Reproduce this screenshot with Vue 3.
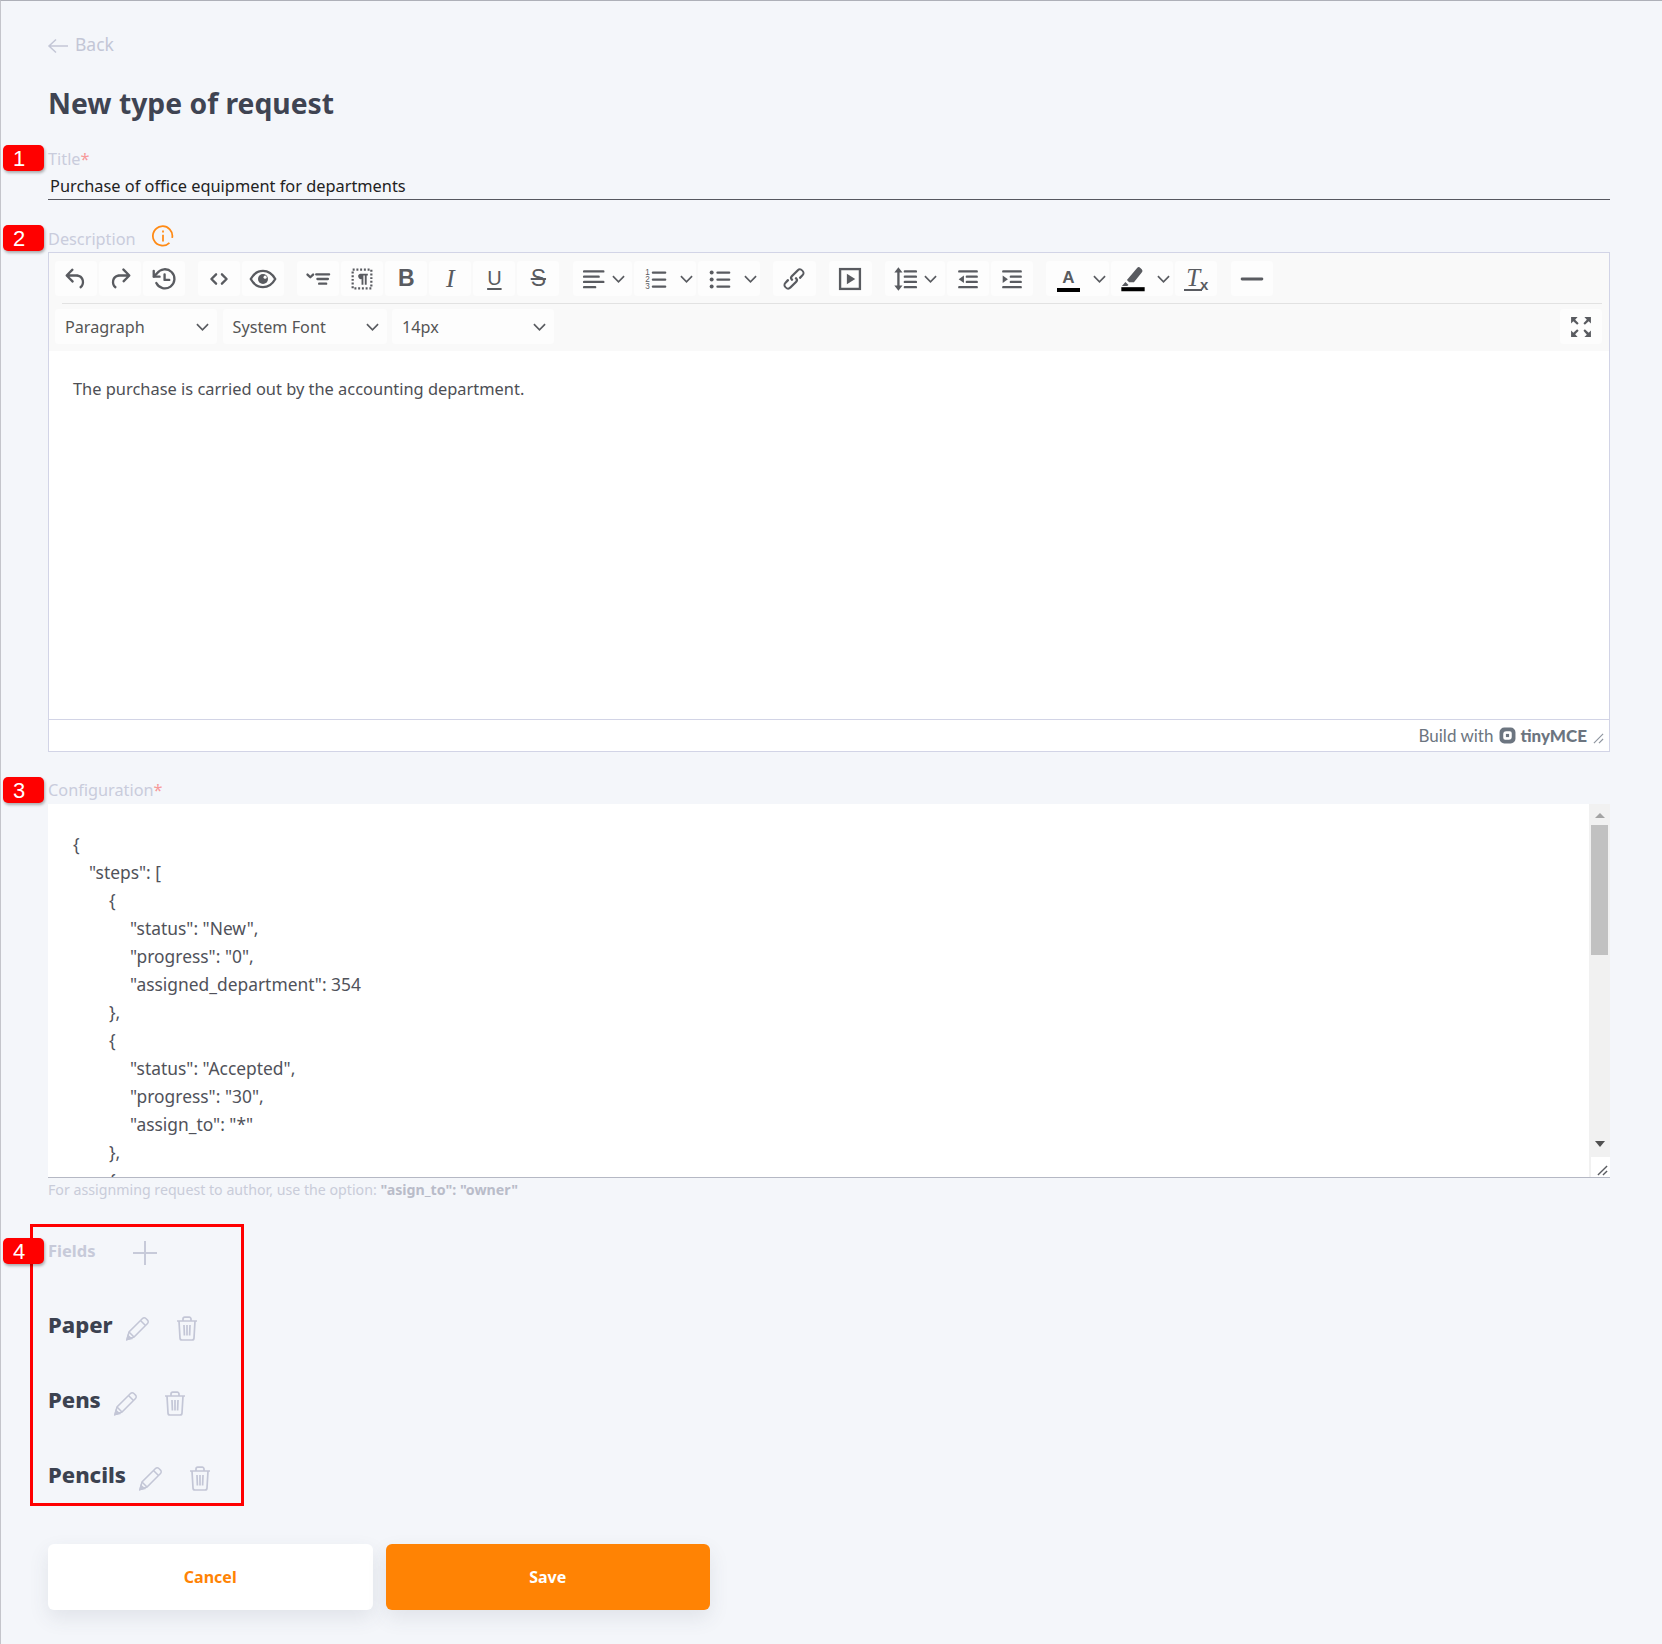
<script setup>
const configLines = [
  { text: '{', indent: 0 },
  { text: '"steps": [', indent: 16 },
  { text: '{', indent: 36 },
  { text: '"status": "New",', indent: 57 },
  { text: '"progress": "0",', indent: 57 },
  { text: '"assigned_department": 354', indent: 57 },
  { text: '},', indent: 36 },
  { text: '{', indent: 36 },
  { text: '"status": "Accepted",', indent: 57 },
  { text: '"progress": "30",', indent: 57 },
  { text: '"assign_to": "*"', indent: 57 },
  { text: '},', indent: 36 },
  { text: '{', indent: 36 }
]
const fields = ['Paper', 'Pens', 'Pencils']
const selects = [
  { label: 'Paragraph', cls: 'sel-a' },
  { label: 'System Font', cls: 'sel-b' },
  { label: '14px', cls: 'sel-c' }
]
</script>

<template>
  <div class="page">
    <a class="back">
      <svg class="back-arrow" viewBox="0 0 22 16" fill="none"><path d="M21 8H2M9 1.5 2 8l7 6.5" /></svg>
      <span>Back</span>
    </a>
    <h1 class="heading">New type of request</h1>

    <section class="field title-field">
      <span class="badge badge-1">1</span>
      <label class="label">Title<em>*</em></label>
      <div class="input">Purchase of office equipment for departments</div>
    </section>

    <section class="field desc-field">
      <span class="badge badge-2">2</span>
      <div class="desc-head">
        <label class="label">Description</label>
        <svg class="info" viewBox="0 0 24 24" fill="none">
          <path d="M19 19.5A10.6 10.6 0 1 1 22 14" />
          <path d="M12 10.5V18M12 6v2.2" />
        </svg>
      </div>
      <div class="editor">
        <div class="toolbar">
          <div class="row row-1">
            <div class="group">
              <button class="tb"><svg class="ico" viewBox="0 0 24 24"><path class="f" d="M6.4 8H12c3.7 0 6.2 2 6.8 5.1.6 2.7-.4 5.6-2.3 6.8a1 1 0 0 1-1-1.8c1.1-.6 1.8-2.7 1.4-4.6-.5-2.1-2.1-3.5-4.9-3.5H6.4l3.3 3.3a1 1 0 1 1-1.4 1.4l-5-5a1 1 0 0 1 0-1.4l5-5a1 1 0 0 1 1.4 1.4L6.4 8Z" /></svg></button>
              <button class="tb"><svg class="ico" viewBox="0 0 24 24"><path class="f" d="M17.6 10H12c-2.8 0-4.4 1.4-4.9 3.5-.4 2 .3 4 1.4 4.6a1 1 0 1 1-1 1.8c-2-1.2-2.9-4.1-2.3-6.8.6-3 3-5.1 6.8-5.1h5.6l-3.3-3.3a1 1 0 1 1 1.4-1.4l5 5a1 1 0 0 1 0 1.4l-5 5a1 1 0 0 1-1.4-1.4l3.3-3.3Z" /></svg></button>
              <button class="tb"><svg class="ico" viewBox="0 0 24 24"><path class="s" d="M5.4 15.5A8.2 8.2 0 1 0 6 7.2L3.4 9.8" /><path class="s" d="M3.2 5v5h5" /><path class="s" d="M12.5 8v4.8h4" /></svg></button>
            </div>
            <div class="group">
              <button class="tb"><svg class="ico" viewBox="0 0 24 24"><path class="s" d="M9.5 8l-4 4 4 4M14.5 8l4 4-4 4" /></svg></button>
              <button class="tb"><svg class="ico" viewBox="0 0 24 24"><path class="s" d="M1.5 12C4 7.5 7.6 5 12 5s8 2.500 10.500 7C20 16.500 16.400 19 12 19s-8-2.500-10.500-7Z" /><circle class="f" cx="12" cy="12" r="4.300" /><circle cx="13.800" cy="10.400" r="1.300" fill="#fdfdfd" /></svg></button>
            </div>
            <div class="group">
              <button class="tb"><svg class="ico" viewBox="0 0 24 24"><path class="s" d="M3 8.200l2.400 2.300 2.400-2.300M10.500 8h11M11.500 12h9M13 16h6" /></svg></button>
              <button class="tb"><svg class="ico" viewBox="0 0 24 24"><rect x="4" y="4" width="16" height="16" fill="none" stroke="#595b60" stroke-width="1.900" stroke-dasharray="1.700 1.500" /><path class="f" d="M10.500 7.500H17v1.600h-1V17h-1.600V9.100h-1.200V17h-1.600v-5a2.300 2.300 0 0 1-1.100-4.500Z" /></svg></button>
              <button class="tb glyph g-bold">B</button>
              <button class="tb glyph g-italic">I</button>
              <button class="tb glyph g-under">U</button>
              <button class="tb glyph g-strike">S</button>
            </div>
            <div class="group">
              <button class="tb split s59"><svg class="ico" viewBox="0 0 24 24"><path class="s" d="M3.500 5.500H20M3.500 10H16M3.500 14.500H20M3.500 19H13" /></svg><svg class="chev" viewBox="0 0 14 8"><path d="M1 1l6 6 6-6" /></svg></button>
              <button class="tb split s62"><svg class="ico" viewBox="0 0 24 24"><text x="2" y="8.500" class="mini">1</text><text x="2" y="14.500" class="mini">2</text><text x="2" y="20.500" class="mini">3</text><path class="s" d="M8.500 6.500H19M8.500 12.500H19M8.500 18.500H19" /></svg><svg class="chev" viewBox="0 0 14 8"><path d="M1 1l6 6 6-6" /></svg></button>
              <button class="tb split s62"><svg class="ico" viewBox="0 0 24 24"><circle class="f" cx="4" cy="6.500" r="1.700" /><circle class="f" cx="4" cy="12.500" r="1.700" /><circle class="f" cx="4" cy="18.500" r="1.700" /><path class="s" d="M9 6.500H19M9 12.500H19M9 18.500H19" /></svg><svg class="chev" viewBox="0 0 14 8"><path d="M1 1l6 6 6-6" /></svg></button>
            </div>
            <div class="group">
              <button class="tb w43"><svg class="ico" viewBox="0 0 24 24"><path class="f" d="M6.200 12.300a1 1 0 0 1 1.400 1.400l-2 2a2 2 0 1 0 2.800 2.800l4.800-4.800a1 1 0 0 0 0-1.400 1 1 0 1 1 1.400-1.300 2.900 2.900 0 0 1 0 4L9.600 20a3.900 3.900 0 0 1-5.500-5.500l2-2.200Zm11.600-.6a1 1 0 0 1-1.400-1.400l2-2a2 2 0 1 0-2.800-2.800L10.800 10.300a1 1 0 0 0 0 1.400A1 1 0 1 1 9.400 13a2.900 2.900 0 0 1 0-4l5-5a3.900 3.900 0 0 1 5.500 5.500l-2.100 2.200Z" /></svg></button>
            </div>
            <div class="group">
              <button class="tb w43"><svg class="ico" viewBox="0 0 24 24"><rect x="3.500" y="3.500" width="17" height="17" fill="none" stroke="#595b60" stroke-width="2" /><path class="f" d="M9.300 7.500 16.500 12l-7.200 4.500Z" /></svg></button>
            </div>
            <div class="group">
              <button class="tb split s60"><svg class="ico" viewBox="0 0 24 24"><path class="s" d="M5.500 4.500v15" /><path class="f" d="M5.500 2 9 6.500H2ZM5.500 22 9 17.500H2Z" /><path class="s" d="M11 5.500h9.500M11 10h9.500M11 14.500h9.500M11 19h9.500" /></svg><svg class="chev" viewBox="0 0 14 8"><path d="M1 1l6 6 6-6" /></svg></button>
              <button class="tb"><svg class="ico" viewBox="0 0 24 24"><path class="s" d="M4.500 5.500h15M11 10h8.500M11 14.500h8.500M4.500 19h15" /><path class="f" d="M8.500 9v6.500L4 12.200Z" /></svg></button>
              <button class="tb"><svg class="ico" viewBox="0 0 24 24"><path class="s" d="M4.500 5.500h15M11 10h8.500M11 14.500h8.500M4.500 19h15" /><path class="f" d="M4 9v6.500L8.500 12.200Z" /></svg></button>
            </div>
            <div class="group">
              <button class="tb split s63"><span class="color-a"><span class="a-letter">A</span><i class="a-bar"></i></span><svg class="chev" viewBox="0 0 14 8"><path d="M1 1l6 6 6-6" /></svg></button>
              <button class="tb split s62h"><svg class="ico" viewBox="0 0 24 24"><path class="f" d="M15.500 2.500a2 2 0 0 1 2.800 0l1.200 1.200a2 2 0 0 1 0 2.800l-6.700 8.200H8.700L6.800 12.800 15.500 2.500ZM5.500 14.500l2.700 2.600-1.300.9H2.500Z" /><rect x="2" y="19" width="20" height="3.500" fill="#000" /></svg><svg class="chev" viewBox="0 0 14 8"><path d="M1 1l6 6 6-6" /></svg></button>
              <button class="tb glyph g-clear"><span class="clear-t">T</span><span class="clear-x">x</span></button>
            </div>
            <div class="group">
              <button class="tb"><svg class="ico" viewBox="0 0 24 24"><path class="s thick" d="M3.500 12h17" /></svg></button>
            </div>
          </div>
          <div class="row-2">
            <div class="sel-list">
              <button v-for="s in selects" :key="s.label" class="select" :class="s.cls">
                <span>{{ s.label }}</span>
                <svg class="chev" viewBox="0 0 14 8"><path d="M1 1l6 6 6-6" /></svg>
              </button>
            </div>
            <button class="tb full"><svg class="ico" viewBox="0 0 24 24"><path class="f" d="M15.300 10l-1.200-1.300 2.900-3L14.900 3.500H20.500v5.600l-1.900-2.100-3.300 3ZM8.700 10 5.400 7 3.500 9.100V3.500h5.600L7 5.700l3 3L8.700 10Zm5.400 5.300 1.200-1.300 3.300 3 1.900-2.100v5.600h-5.600l2.100-1.800-2.900-3.400ZM8.700 14l1.300 1.300-3 3L9.100 20.500H3.500v-5.600l1.900 2.100 3.300-3Z" /></svg></button>
          </div>
        </div>
        <div class="body">The purchase is carried out by the accounting department.</div>
        <div class="status">
          <span class="build">Build with</span>
          <svg class="logo" viewBox="0 0 16 16"><path fill="#6c7580" fill-rule="evenodd" d="M5 .5h6A4.500 4.500 0 0 1 15.500 5v6A4.500 4.500 0 0 1 11 15.500H5A4.500 4.500 0 0 1 .5 11V5A4.500 4.500 0 0 1 5 .5Zm1.800 3.500A2.800 2.800 0 0 0 4 6.800v3.400A1.800 1.800 0 0 0 5.800 12h3.400A2.800 2.800 0 0 0 12 9.200V5.800A1.800 1.800 0 0 0 10.200 4Z" /><rect x="6.500" y="6.500" width="3" height="3" fill="#6c7580" /></svg>
          <span class="tiny">tinyMCE</span>
          <svg class="grip" viewBox="0 0 12 12"><path d="M1 11 11 1M6.500 11 11 6.500" /></svg>
        </div>
      </div>
    </section>

    <section class="field config-field">
      <span class="badge badge-3">3</span>
      <label class="label config-label">Configuration<em>*</em></label>
      <div class="config">
        <div class="code">
          <div v-for="(l, i) in configLines" :key="i" class="code-line" :style="{ marginLeft: l.indent + 'px' }">{{ l.text }}</div>
        </div>
        <div class="side">
          <div class="scroll">
            <i class="arrow up"></i>
            <i class="thumb"></i>
            <i class="arrow down"></i>
          </div>
          <div class="corner"><svg class="grip dark" viewBox="0 0 12 12"><path d="M1 11 11 1M6.500 11 11 6.500" /></svg></div>
        </div>
      </div>
      <p class="hint">For assignming request to author, use the option: <b>"asign_to": "owner"</b></p>
    </section>

    <section class="fields">
      <span class="red-box"></span>
      <span class="badge badge-4">4</span>
      <div class="fields-head">
        <span class="fields-title">Fields</span>
        <svg class="plus" viewBox="0 0 26 26"><path d="M13 1v24M1 13h24" /></svg>
      </div>
      <div class="field-list">
        <div v-for="f in fields" :key="f" class="field-row">
          <span class="field-name">{{ f }}</span>
          <svg class="pencil" viewBox="0 0 25 25" fill="none"><path d="M2 23.500 4 16 17.500 2.500a2.400 2.400 0 0 1 3.400 0l1.600 1.600a2.400 2.400 0 0 1 0 3.400L9 21Z" /><path d="M15.500 4.500l5 5M4 16l5 5" /><path class="tip" d="M2 23.500 3 19.500l3.500 3Z" /></svg>
          <svg class="trash" viewBox="0 0 22 25" fill="none"><path d="M1 5h20M7 5V3a1.800 1.800 0 0 1 1.800-1.800h4.400A1.800 1.800 0 0 1 15 3v2M3 5l1 17a2 2 0 0 0 2 2h10a2 2 0 0 0 2-2l1-17M8 9l.4 10.500M11 9v10.500M14 9l-.4 10.500" /></svg>
        </div>
      </div>
    </section>

    <div class="actions">
      <button class="btn cancel">Cancel</button>
      <button class="btn save">Save</button>
    </div>
  </div>
</template>

<style scoped>
* { box-sizing: border-box; }
.page {
  position: relative;
  width: 1662px;
  min-height: 1644px;
  background: #f4f6fa;
  border-top: 1px solid #aeb0b8;
  border-left: 1px solid #c4c5cb;
  padding: 31px 52px 0 47px;
  font-family: "Noto Sans", "Open Sans", sans-serif;
  color: #3f4452;
  overflow: hidden;
}
.back {
  display: flex;
  align-items: center;
  gap: 6px;
  height: 24px;
  font-size: 17.500px;
  color: #c3c6d6;
}
.back-arrow { width: 22px; height: 16px; stroke: #c3c6d6; stroke-width: 1.500; margin-top: 3px; margin-left: -1px; }
.heading {
  margin: 27px 0 0 0;
  height: 41px;
  font-size: 28.300px;
  line-height: 40px;
  font-weight: 700;
  color: #3f4452;
}
.field, .fields { position: relative; }
.title-field { margin-top: 24px; }
.label {
  display: block;
  font-size: 16.300px;
  line-height: 22px;
  color: #c9ccdc;
}
.label em { font-style: normal; color: #f79a9a; }
.input {
  height: 30px;
  padding: 4px 0 0 2px;
  font-size: 16.350px;
  line-height: 24px;
  color: #222;
  border-bottom: 1px solid #55575f;
}
.badge {
  position: absolute;
  left: -45px;
  width: 41px;
  height: 26px;
  padding-right: 9px;
  background: #ff0000;
  border-radius: 5px;
  box-shadow: 1px 2px 3px rgba(0, 0, 0, .3);
  color: #fff;
  font-family: "Liberation Sans", sans-serif;
  font-size: 22px;
  line-height: 27px;
  text-align: center;
  z-index: 3;
}
.badge-1 { top: -3px; }
.badge-2 { top: -1px; }
.badge-3 { top: 0; }
.badge-4 { top: 0; }

.desc-field { margin-top: 26px; }
.desc-head { display: flex; align-items: center; height: 26px; }
.info { width: 22px; height: 22px; margin: 0 0 6px 16px; stroke: #ff8a14; stroke-width: 1.900; }
.editor {
  height: 500px;
  border: 1px solid #d2d4e6;
  background: #fff;
  display: flex;
  flex-direction: column;
}
.toolbar {
  height: 98px;
  padding: 8px 7px 0 6px;
  background: #f9f9f9;
}
.row { display: flex; gap: 13.200px; }
.row-1 {
  height: 42px;
  position: relative;
}
.row-1::after {
  content: "";
  position: absolute;
  left: 7px;
  right: 0;
  top: 42px;
  height: 1px;
  background: #e2e2e2;
}
.group { display: flex; gap: 2px; }
.tb {
  display: flex;
  align-items: center;
  justify-content: center;
  width: 42px;
  height: 35px;
  padding: 0;
  border: 0;
  border-radius: 4px;
  background: #fdfdfd;
  color: #595b60;
}
.w43 { width: 43px; }
.ico { width: 28px; height: 28px; flex: none; }
.f { fill: #595b60; }
.s { fill: none; stroke: #595b60; stroke-width: 2; stroke-linecap: round; stroke-linejoin: round; }
.thick { stroke-width: 2.400; }
.mini { font-family: "Liberation Sans", sans-serif; font-size: 7px; fill: #595b60; }
.chev { width: 13px; height: 8px; flex: none; fill: none; stroke: #595b60; stroke-width: 1.800; }
.split { justify-content: space-between; padding: 0 7px; }
.s59 { width: 59px; }
.s60 { width: 60px; padding-right: 8px; }
.s62 { width: 62px; padding: 0 3px 0 9px; }
.s63 { width: 63px; padding: 0 3px 0 8px; }
.s62h { width: 62px; padding: 0 3px 0 8px; }
.glyph { font-family: "Liberation Sans", sans-serif; }
.g-bold { font-size: 23px; font-weight: 700; }
.g-italic { font-family: "Liberation Serif", serif; font-style: italic; font-size: 26px; }
.g-under { font-size: 20px; text-decoration: underline; text-decoration-thickness: 2px; text-underline-offset: 3px; }
.g-strike { font-size: 23px; text-decoration: line-through; text-decoration-thickness: 2px; }
.g-clear { position: relative; }
.clear-t { font-family: "Liberation Serif", serif; font-style: italic; font-size: 25px; border-bottom: 2px solid #595b60; line-height: 23px; padding: 0 2px; }
.clear-x { font-size: 15px; font-weight: 700; margin-top: 11px; margin-left: -2px; }
.color-a { display: flex; flex-direction: column; align-items: center; width: 28px; }
.a-letter { font-family: "Liberation Sans", sans-serif; font-weight: 700; font-size: 17px; line-height: 18px; margin-top: 3px; }
.a-bar { display: block; width: 23px; height: 4px; background: #000; margin-top: 1px; }
.row-2 {
  display: flex;
  justify-content: space-between;
  padding-top: 6px;
}
.sel-list { display: flex; gap: 5.500px; }
.select {
  display: flex;
  align-items: center;
  justify-content: space-between;
  height: 35px;
  padding: 0 8px 0 10px;
  border: 0;
  border-radius: 4px;
  background: #fdfdfd;
  font-family: inherit;
  font-size: 16.200px;
  color: #555;
}
.sel-a { width: 162px; }
.sel-b { width: 164px; }
.sel-c { width: 162px; }
.full { width: 42px; }
.body {
  flex: 1;
  padding: 26px 24px;
  font-size: 16.420px;
  line-height: 24px;
  color: #4d4f55;
}
.status {
  display: flex;
  align-items: center;
  height: 32px;
  padding-right: 5px;
  border-top: 1px solid #d2d4e6;
  justify-content: flex-end;
  font-family: Lato, sans-serif;
  color: #6c7580;
}
.build { font-size: 17px; }
.logo { width: 17px; height: 17px; margin-left: 6px; }
.tiny { font-size: 17px; font-weight: 900; margin-left: 4px; }
.grip { width: 11px; height: 11px; margin: 6px 0 0 6px; fill: none; stroke: #8f96a0; stroke-width: 1.300; }
.grip.dark { margin: 0; stroke: #595b60; stroke-width: 1.500; }

.config-field { margin-top: 25px; }
.config-label { line-height: 27px; }
.config {
  display: flex;
  height: 374px;
  background: #fff;
  border-bottom: 1px solid #b5b8c4;
  overflow: hidden;
}
.code {
  flex: 1;
  padding: 25.500px 0 0 25px;
  font-size: 17.400px;
  line-height: 28px;
  color: #50525a;
}
.code-line { height: 28px; white-space: nowrap; }
.side { width: 21px; display: flex; flex-direction: column; }
.scroll {
  flex: 1;
  background: #f1f1f1;
  display: flex;
  flex-direction: column;
  align-items: center;
}
.thumb { display: block; width: 17px; height: 130px; margin-top: 7px; background: #c1c1c1; }
.arrow { display: block; width: 0; height: 0; border-left: 5px solid transparent; border-right: 5px solid transparent; }
.arrow.up { margin-top: 9px; border-bottom: 5px solid #a3a3a3; }
.arrow.down { margin-top: auto; margin-bottom: 9px; border-top: 6px solid #505050; }
.corner {
  height: 21px;
  background: #fff;
  border-left: 2px solid #f1f1f1;
  border-top: 1px solid #f1f1f1;
  display: flex;
  justify-content: flex-end;
  align-items: flex-end;
  padding: 0 2px 1px 0;
}
.hint {
  margin: 2px 0 0;
  height: 20px;
  font-size: 14.200px;
  line-height: 20px;
  color: #c9ccd9;
}
.hint b { font-weight: 700; color: #b9bcc9; }

.fields { margin-top: 38px; }
.red-box {
  position: absolute;
  left: -18px;
  top: -14px;
  width: 214px;
  height: 282px;
  border: 3px solid #ff0000;
  pointer-events: none;
}
.fields-head { display: flex; align-items: center; height: 26px; }
.fields-title { font-size: 16.500px; font-weight: 700; color: #c7cad9; width: 85px; margin-bottom: 2px; }
.plus { width: 26px; height: 26px; margin-top: 4px; margin-left: -1px; fill: none; stroke: #c7cad9; stroke-width: 2; }
.field-list { display: flex; flex-direction: column; gap: 40px; margin-top: 44.500px; }
.field-row { display: flex; align-items: center; height: 35px; }
.field-name { font-size: 22px; font-weight: 800; color: #3c4250; margin-right: 12px; margin-bottom: 4px; }
.pencil { width: 25px; height: 25px; margin-top: 4px; stroke: #c3c6d6; stroke-width: 1.500; margin-right: 26px; }
.pencil .tip { fill: #c3c6d6; }
.trash { width: 22px; height: 25px; margin-top: 4px; stroke: #c3c6d6; stroke-width: 1.700; }

.actions { display: flex; gap: 13px; margin-top: 50px; }
.btn {
  width: 324.500px;
  height: 66px;
  border: 0;
  border-radius: 6px;
  font-family: inherit;
  font-size: 16px;
  font-weight: 700;
  box-shadow: 0 8px 20px rgba(60, 66, 90, .1);
}
.cancel { background: #fff; color: #ff8304; }
.save { background: #ff8304; color: #fff; }
</style>
